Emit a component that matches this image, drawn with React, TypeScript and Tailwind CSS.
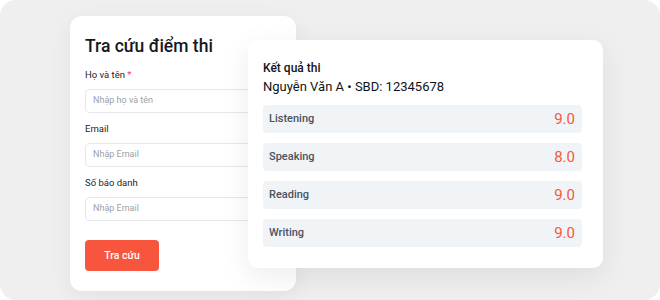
import React from "react";

const scores = [
  { skill: "Listening", score: "9.0" },
  { skill: "Speaking", score: "8.0" },
  { skill: "Reading", score: "9.0" },
  { skill: "Writing", score: "9.0" },
];

function Field({ label, placeholder, required }: { label: string; placeholder: string; required?: boolean }) {
  return (
    <div className="flex flex-col">
      <label className="text-[9.5px] leading-[14px] text-[#1f2328]">
        {label}
        {required && <span className="text-[#ef4444]"> *</span>}
      </label>
      <div className="mt-[7px] h-[24px] rounded-[4px] border border-[#e6e8eb] bg-white px-[7px] flex items-center">
        <span className="text-[9px] text-[#9aa1aa]">{placeholder}</span>
      </div>
    </div>
  );
}

export default function App() {
  return (
    <div className="w-[660px] h-[300px] bg-white font-['Roboto',sans-serif]">
      <div className="relative w-[660px] h-[300px] rounded-[16px] bg-[#efefef] overflow-hidden">
        {/* search form */}
        <div className="absolute left-[70px] top-[16px] w-[226px] h-[275px] rounded-[12px] bg-white px-[15px] pt-[19px] shadow-[0_6px_24px_rgba(0,0,0,0.06)]">
          <h1 className="text-[17.5px] leading-[22px] font-medium text-[#16181c]">Tra cứu điểm thi</h1>
          <div className="mt-[11px] flex flex-col gap-[9px]">
            <Field label="Họ và tên" placeholder="Nhập họ và tên" required />
            <Field label="Email" placeholder="Nhập Email" />
            <Field label="Số báo danh" placeholder="Nhập Email" />
          </div>
          <button className="mt-[19px] w-[74px] h-[31px] rounded-[4px] bg-[#f7553e] text-[10.5px] font-medium text-white">
            Tra cứu
          </button>
        </div>

        {/* result card */}
        <div className="absolute left-[248px] top-[40px] w-[355px] h-[228px] rounded-[10px] bg-white pl-[15px] pr-[21px] pt-[20px] shadow-[0_8px_30px_rgba(0,0,0,0.08)]">
          <div className="text-[12px] leading-[16px] font-medium text-[#111317]">Kết quả thi</div>
          <div className="mt-[2px] text-[13px] leading-[18px] text-[#111317]">Nguyễn Văn A • SBD: 12345678</div>
          <div className="mt-[9px] flex flex-col gap-[10px]">
            {scores.map((s) => (
              <div
                key={s.skill}
                className="h-[28px] rounded-[4px] bg-[#f1f4f7] pl-[6px] pr-[7px] flex items-center justify-between"
              >
                <span className="text-[11px] font-medium text-[#4b5260]">{s.skill}</span>
                <span className="text-[15px] text-[#f25a38]">{s.score}</span>
              </div>
            ))}
          </div>
        </div>
      </div>
    </div>
  );
}
